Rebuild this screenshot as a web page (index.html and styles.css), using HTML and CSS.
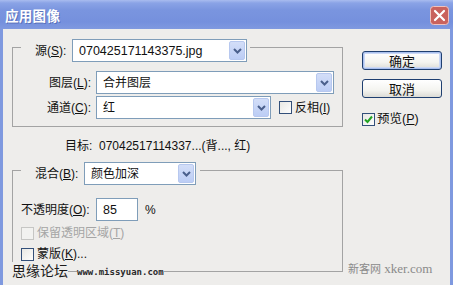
FILE: index.html
```html
<!DOCTYPE html>
<html lang="zh">
<head>
<meta charset="utf-8">
<title>应用图像</title>
<link rel="stylesheet" href="styles.css">
</head>
<body>
<div class="window">
  <div class="titlebar">
    <span class="title">应用图像</span>
    <span class="close">
      <svg width="19" height="19" viewBox="0 0 19 19">
        <rect x="0.5" y="0.5" width="18" height="18" rx="3" fill="#c9625d" stroke="#efc2bd"/>
        <path d="M5 5 L14 14 M14 5 L5 14" stroke="#fff" stroke-width="2.2" stroke-linecap="round"/>
      </svg>
    </span>
  </div>
  <div class="frame">
    <div class="main">
      <div class="group g1">
        <div class="legend legend-src">
          <span class="legend-label">源(<u>S</u>):</span>
          <div class="select w-src"><span class="val num">070425171143375.jpg</span><span class="drop"><svg width="9" height="6" viewBox="0 0 9 6"><path d="M1 1 L4.5 4.5 L8 1" fill="none" stroke="#4a5f8c" stroke-width="2"/></svg></span></div>
        </div>
        <div class="row row-layer">
          <span class="lbl">图层(<u>L</u>):</span>
          <div class="select w-layer"><span class="val">合并图层</span><span class="drop"><svg width="9" height="6" viewBox="0 0 9 6"><path d="M1 1 L4.5 4.5 L8 1" fill="none" stroke="#4a5f8c" stroke-width="2"/></svg></span></div>
        </div>
        <div class="row row-chan">
          <span class="lbl">通道(<u>C</u>):</span>
          <div class="select w-chan"><span class="val">红</span><span class="drop"><svg width="9" height="6" viewBox="0 0 9 6"><path d="M1 1 L4.5 4.5 L8 1" fill="none" stroke="#4a5f8c" stroke-width="2"/></svg></span></div>
          <span class="check inv"><span class="box"></span><span>反相(<u>I</u>)</span></span>
        </div>
      </div>
      <div class="target">目标:&nbsp; 07042517114337...(背..., 红)</div>
      <div class="group g2">
        <div class="legend legend-blend">
          <span class="legend-label">混合(<u>B</u>):</span>
          <div class="select w-blend"><span class="val">颜色加深</span><span class="drop"><svg width="9" height="6" viewBox="0 0 9 6"><path d="M1 1 L4.5 4.5 L8 1" fill="none" stroke="#4a5f8c" stroke-width="2"/></svg></span></div>
        </div>
        <div class="row row-op">
          <span class="lbl lbl-left">不透明度(<u>O</u>):</span>
          <div class="input"><span class="val num">85</span></div>
          <span class="pct">%</span>
        </div>
        <div class="check row-check disabled"><span class="box"></span><span>保留透明区域(<u>T</u>)</span></div>
        <div class="check row-check mask"><span class="box"></span><span>蒙版(<u>K</u>)...</span></div>
      </div>
    </div>
    <div class="side">
      <div class="btn default"><span>确定</span></div>
      <div class="btn cancel"><span>取消</span></div>
      <div class="check preview"><span class="box checked"><svg width="11" height="11" viewBox="0 0 11 11"><path d="M2 5.5 L4.5 8 L9 2.5" fill="none" stroke="#22a322" stroke-width="2"/></svg></span><span>预览(<u>P</u>)</span></div>
    </div>
  </div>
  <div class="wm-left"><span class="wm-cn">思缘论坛</span><span class="wm-gap"></span><span class="wm-url">www.missyuan.com</span></div>
  <div class="wm-right"><span class="wm-cn2">新客网</span> <span class="wm-en">xker.com</span></div>
</div>
</body>
</html>
```

FILE: styles.css
```css
* { box-sizing: border-box; }
html, body { margin: 0; padding: 0; background: #eeedeb; }
body {
  font-family: "Liberation Sans", "Noto Sans CJK SC", sans-serif;
  font-size: 12px;
  color: #111;
}
u { text-decoration: underline; text-underline-offset: 1px; }

.window {
  position: relative;
  width: 453px;
  height: 285px;
  overflow: hidden;
  background: #eeedeb;
}

.titlebar {
  height: 29px;
  display: flex;
  align-items: center;
  justify-content: space-between;
  padding: 0 4px 0 5px;
  background: linear-gradient(#a9bcef 0px, #8aa3e6 3px, #7a95df 10px, #7590dd 22px, #7f99e0 29px);
}
.title {
  font-family: "Noto Sans CJK SC", sans-serif;
  font-weight: 700;
  font-size: 13.5px;
  line-height: 16px;
  color: #fff;
  letter-spacing: 0.3px;
  text-shadow: 1px 1px 0 rgba(60, 80, 150, 0.5);
}
.close { display: flex; margin-top: 2px; }

.frame {
  height: 256px;
  display: flex;
  border-left: 3px solid #7f99df;
  border-right: 3px solid #7f99df;
  padding-left: 9px;
}

.main { width: 331px; display: flex; flex-direction: column; }

.group {
  border: 1px solid #a3a3a3;
  display: flex;
  flex-direction: column;
}
.g1 { margin-top: 18px; padding-bottom: 6px; height: 80px; }
.g2 { margin-top: 17px; height: 102px; }

.legend {
  align-self: flex-start;
  display: flex;
  align-items: center;
  height: 23px;
  margin-top: -9px;
  margin-left: 8px;
  padding-left: 14px;
  background: #eeedeb;
}
.legend-src { padding-right: 3px; }
.legend-blend { padding-right: 4px; }
.legend-label { line-height: 14px; }
.legend-src .legend-label { width: 37px; }
.legend-blend .legend-label { width: 49px; }

.row { display: flex; align-items: center; height: 23px; }
.row-layer { margin-top: 9px; }
.row-chan { margin-top: 2px; }
.lbl { width: 79px; text-align: right; line-height: 14px; padding-right: 1px; }
.lbl-left { text-align: left; padding-left: 8px; }

.select, .input {
  height: 23px;
  border: 1px solid #7f9db9;
  background: #fff;
  display: flex;
  align-items: center;
  justify-content: space-between;
  padding: 1px 1px 1px 6px;
}
.row .select, .row .input { margin-left: 4px; }
.val { line-height: 14px; }
.num { font-family: "Liberation Sans", sans-serif; font-size: 12.5px; }
.drop {
  width: 16px;
  height: 19px;
  background: linear-gradient(#d3def8, #bccdf5);
  border: 1px solid #b7c8ef;
  border-radius: 2px;
  display: flex;
  align-items: center;
  justify-content: center;
}
.w-src { width: 175px; }
.w-layer { width: 238px; }
.w-chan { width: 175px; }
.w-blend { width: 112px; }
.input { width: 42px; }

.check { display: flex; align-items: center; gap: 3px; line-height: 14px; }
.box {
  width: 13px;
  height: 13px;
  border: 1px solid #33507a;
  background: linear-gradient(135deg, #e8e8e4, #fdfdfd);
  display: flex;
  align-items: center;
  justify-content: center;
}
.inv { margin-left: 8px; }
.row-check { height: 14px; padding-left: 8px; }
.row-check.disabled { margin-top: 5px; color: #a5a5a5; }
.row-check.disabled .box { border-color: #c6c6c4; background: #f2f2f0; }
.row-check.mask { margin-top: 7px; }
.row-op { margin-top: 13px; }
.pct { margin-left: 7px; line-height: 14px; }

.target {
  margin-top: 12px;
  margin-left: 53px;
  height: 14px;
  line-height: 14px;
}

.side {
  display: flex;
  flex-direction: column;
  margin-left: 19px;
  padding-top: 22px;
}
.btn {
  width: 80px;
  height: 19px;
  border: 1px solid #1f3f70;
  border-radius: 3px;
  background: linear-gradient(#ffffff, #f4f4f0 60%, #dcdcd6);
  display: flex;
  align-items: center;
  justify-content: center;
  font-family: "Noto Sans CJK SC", sans-serif;
  font-size: 13px;
  line-height: 15px;
}
.btn.default { box-shadow: inset 0 0 0 1px #a9c0ee, inset 0 0 0 2px #cbd8f5; }
.btn.cancel { margin-top: 9px; }
.preview { margin-top: 14px; gap: 2px; font-size: 12.5px; }

.wm-left {
  position: absolute;
  left: 12px;
  top: 262px;
  display: flex;
  align-items: center;
  height: 16px;
}
.wm-cn {
  font-family: "Noto Sans CJK SC", sans-serif;
  font-size: 14px;
  line-height: 16px;
  color: #1a1a1a;
  background: #eeedeb;
}
.wm-gap { width: 9px; }
.wm-url {
  font-family: "DejaVu Sans Mono", monospace;
  font-weight: 700;
  font-size: 9px;
  line-height: 10px;
  color: #2a2a2a;
  background: #eeedeb;
  margin-top: 3px;
}

.wm-right {
  position: absolute;
  left: 348px;
  top: 261px;
  color: #8a8a8a;
  line-height: 14px;
  white-space: nowrap;
}
.wm-cn2 { font-family: "Noto Sans CJK SC", serif; font-size: 11px; }
.wm-en { font-family: "Liberation Serif", serif; font-size: 13px; }
```
